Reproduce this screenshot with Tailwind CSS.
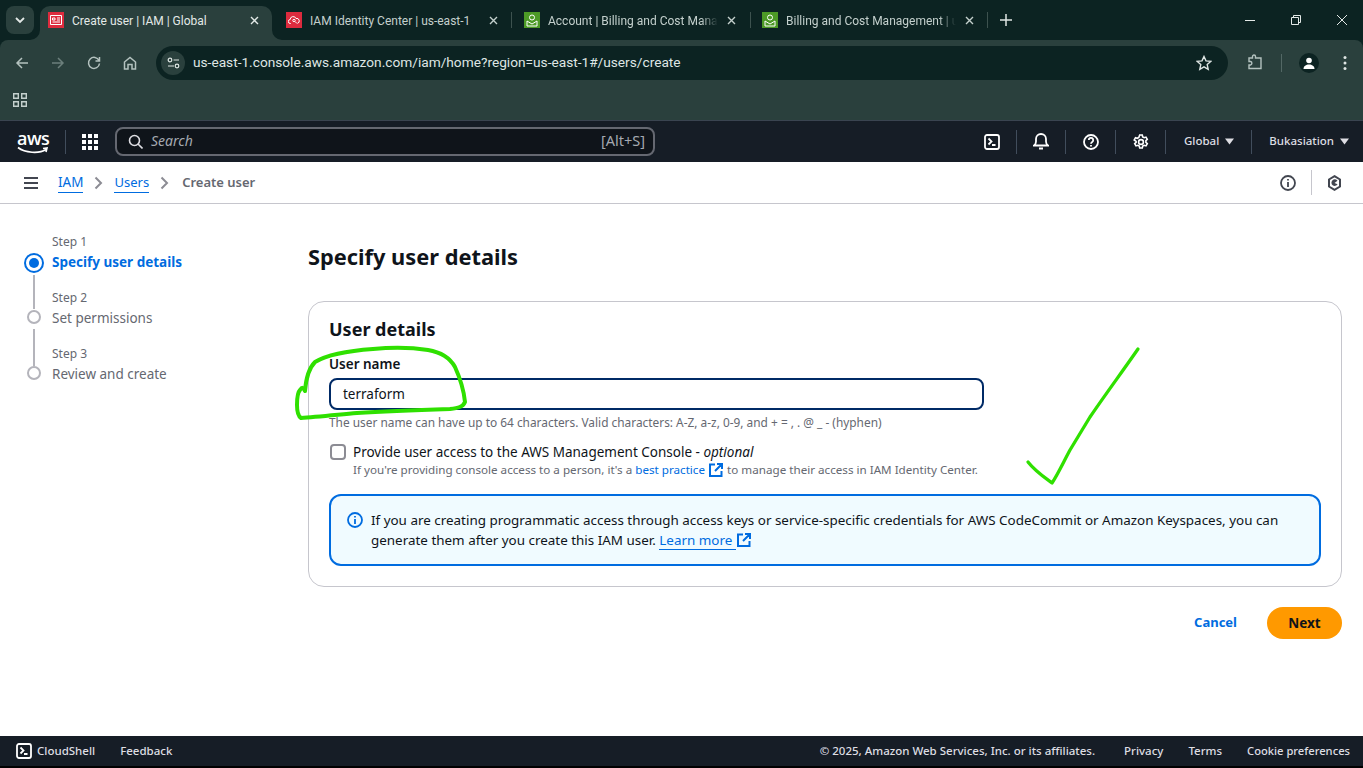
<html>
<head>
    <title>Create user | IAM | Global</title>
    <script src="https://cdn.jsdelivr.net/npm/@tailwindcss/browser@4"></script>
</head>
<body class="relative h-[768px] w-[1363px] overflow-hidden bg-white font-['Noto_Sans',sans-serif] text-[13.5px] text-[#0f141a]">

    <div class="bg-[#0c2322]">
    <!-- Chrome: tabs -->
    <div class="flex h-[40px] bg-[#0c2322] font-['Roboto',sans-serif] text-[12px] text-[#c4d0cd]">
        <div class="ml-[6px] mt-[6px] flex h-[28px] w-[28px] items-center justify-center rounded-[8px] bg-[#2a403d]">
            <svg width="10" height="8" viewBox="0 0 10 8" fill="none" stroke="#e3e9e7" stroke-width="1.800"><path d="M1 2l4 4 4-4"/></svg>
        </div>
        <div class="relative ml-[6px] mt-[6px] flex h-[34px] w-[232px] items-center rounded-t-[10px] bg-[#2a403d] pb-[6px] pl-[8px] text-[#e3e9e7]">
            <svg class="absolute left-[-10px] bottom-0" width="10" height="10" viewBox="0 0 10 10" fill="#2a403d"><path d="M10 0v10H0a10 10 0 0 0 10-10z"/></svg>
            <svg class="absolute right-[-10px] bottom-0" width="10" height="10" viewBox="0 0 10 10" fill="#2a403d"><path d="M0 0v10h10A10 10 0 0 1 0 0z"/></svg>
            <span class="flex h-[16px] w-[16px] items-center justify-center bg-[#dd2b3e]">
                <svg width="12" height="10" viewBox="0 0 12 10" fill="none" stroke="#fff" stroke-width="1"><path d="M.5.5h11v9H.5zM2.500 3h2.500v2H2.500zM7 3h3M7 5h3M2.500 7h7.500"/></svg>
            </span>
            <span class="ml-[8px] mt-[2px] w-[178px] truncate">Create user | IAM | Global</span>
            <svg width="9" height="9" viewBox="0 0 9 9" stroke="#e3e9e7" stroke-width="1.400"><path d="M1 1l7 7M8 1l-7 7"/></svg>
        </div>
        <div class="mt-[3px] flex h-[34px] w-[240px] items-center pl-[14px]">
            <span class="flex h-[16px] w-[16px] items-center justify-center bg-[#dd2b3e]">
                <svg width="12" height="10" viewBox="0 0 12 10" fill="none" stroke="#fff" stroke-width="1"><path d="M3 8.500H2.500a2 2 0 0 1-.3-4 3 3 0 0 1 5.800-1 2.500 2.500 0 0 1 1.500 4.800"/><circle cx="6" cy="5.500" r="1.200"/><path d="M7 6.500l2 2"/></svg>
            </span>
            <span class="ml-[8px] mt-[2px] w-[179px] truncate">IAM Identity Center | us-east-1</span>
            <svg width="9" height="9" viewBox="0 0 9 9" stroke="#c4d0cd" stroke-width="1.400"><path d="M1 1l7 7M8 1l-7 7"/></svg>
            <span class="ml-auto h-[16px] w-px bg-[#3d524f]"></span>
        </div>
        <div class="mt-[3px] flex h-[34px] w-[239px] items-center pl-[12px]">
            <span class="flex h-[16px] w-[16px] items-center justify-center bg-[#4d9a26]">
                <svg width="12" height="13" viewBox="0 0 12 13" fill="none" stroke="#fff" stroke-width="1"><circle cx="6" cy="3.500" r="2.500"/><path d="M1 7l5 3 5-3v5H1z"/></svg>
            </span>
            <span class="ml-[8px] mt-[2px] w-[170px] overflow-hidden whitespace-nowrap [mask-image:linear-gradient(to_right,black_90%,transparent)]">Account | Billing and Cost Management</span>
            <svg class="ml-[9px]" width="9" height="9" viewBox="0 0 9 9" stroke="#c4d0cd" stroke-width="1.400"><path d="M1 1l7 7M8 1l-7 7"/></svg>
            <span class="ml-auto h-[16px] w-px bg-[#3d524f]"></span>
        </div>
        <div class="mt-[3px] flex h-[34px] w-[237px] items-center pl-[11px]">
            <span class="flex h-[16px] w-[16px] items-center justify-center bg-[#4d9a26]">
                <svg width="12" height="13" viewBox="0 0 12 13" fill="none" stroke="#fff" stroke-width="1"><circle cx="6" cy="3.500" r="2.500"/><path d="M1 7l5 3 5-3v5H1z"/></svg>
            </span>
            <span class="ml-[8px] mt-[2px] w-[170px] overflow-hidden whitespace-nowrap [mask-image:linear-gradient(to_right,black_90%,transparent)]">Billing and Cost Management | us-east-1</span>
            <svg class="ml-[9px]" width="9" height="9" viewBox="0 0 9 9" stroke="#c4d0cd" stroke-width="1.400"><path d="M1 1l7 7M8 1l-7 7"/></svg>
            <span class="ml-auto h-[16px] w-px bg-[#3d524f]"></span>
        </div>
        <svg class="ml-[12px] mt-[14px]" width="12" height="12" viewBox="0 0 12 12" stroke="#dfe6e4" stroke-width="1.500"><path d="M6 0v12M0 6h12"/></svg>
        <div class="ml-auto mr-[16px] flex items-center gap-[36px]">
            <svg width="10" height="10" viewBox="0 0 10 10" stroke="#e3e9e7"><path d="M0 5.500h10"/></svg>
            <svg width="10" height="10" viewBox="0 0 10 10" fill="none" stroke="#e3e9e7"><path d="M.5 2.500h7v7h-7zM2.500 2.500V.5h7v7h-2"/></svg>
            <svg width="10" height="10" viewBox="0 0 10 10" stroke="#e3e9e7"><path d="M0 0l10 10M10 0L0 10"/></svg>
        </div>
    </div>

    <!-- Chrome: toolbar -->
    <div class="flex h-[40px] items-center rounded-t-[8px] bg-[#2a403d] font-['Roboto',sans-serif] text-[#dfe6e4]">
        <div class="ml-[15px] mt-[6px] flex w-[141px] items-center">
            <svg class="w-[36px]" width="14" height="14" viewBox="0 0 14 14" fill="none" stroke="#b4c2bf" stroke-width="1.500" preserveAspectRatio="xMinYMid"><path d="M13 7H2M7 2L2 7l5 5"/></svg>
            <svg class="w-[36px]" width="14" height="14" viewBox="0 0 14 14" fill="none" stroke="#6c7f7c" stroke-width="1.500" preserveAspectRatio="xMinYMid"><path d="M1 7h11M7 2l5 5-5 5"/></svg>
            <svg class="w-[36px]" width="14" height="14" viewBox="0 0 14 14" fill="none" stroke="#b4c2bf" stroke-width="1.500" preserveAspectRatio="xMinYMid"><path d="M12 4.500A5.500 5.500 0 1 0 12.500 7.500M12.500 1v4h-4"/></svg>
            <svg class="w-[33px]" width="14" height="14" viewBox="0 0 14 14" fill="none" stroke="#b4c2bf" stroke-width="1.500" preserveAspectRatio="xMinYMid"><path d="M1.500 13V6L7 1.500 12.500 6v7H9V8.500H5V13z"/></svg>
        </div>
        <div class="mt-[6px] flex h-[34px] w-[1072px] items-center rounded-full bg-[#0c2322] pl-[5px]">
            <span class="flex h-[24px] w-[24px] items-center justify-center rounded-full bg-[#2a403d]">
                <svg width="13" height="12" viewBox="0 0 13 12" fill="none" stroke="#dfe6e4" stroke-width="1.200"><circle cx="3" cy="3" r="1.800"/><path d="M6.500 3H12M1 9h6"/><circle cx="10" cy="9" r="1.800"/></svg>
            </span>
            <span class="ml-[8px] text-[13.700px] leading-none text-[#dfe6e4]">us-east-1.console.aws.amazon.com/iam/home?region=us-east-1#/users/create</span>
            <svg class="ml-auto mr-[16px]" width="16" height="16" viewBox="0 0 16 16" fill="none" stroke="#dfe6e4" stroke-width="1.400"><path d="M8 1.500l2 4.400 4.800.5-3.600 3.200 1 4.700L8 11.900l-4.200 2.400 1-4.700L1.200 6.400 6 5.900z"/></svg>
        </div>
        <svg class="ml-[18px] mt-[6px]" width="18" height="18" viewBox="0 0 18 18" fill="none" stroke="#b4c2bf" stroke-width="1.400"><path d="M3 4h3.500V2.500a1.500 1.500 0 0 1 3 0V4H15v10.500H3v-3.500h1.500a1.800 1.800 0 0 0 0-3.500H3z"/></svg>
        <span class="ml-[17px] mt-[6px] h-[18px] w-px bg-[#536865]"></span>
        <span class="ml-[17px] mt-[6px] flex h-[20px] w-[20px] items-center justify-center rounded-full bg-[#0c2322]">
            <svg width="14" height="14" viewBox="0 0 14 14" fill="#fff"><circle cx="7" cy="4.500" r="2.800"/><path d="M1.500 13c0-3 2.500-4.500 5.500-4.500s5.500 1.500 5.500 4.500z"/></svg>
        </span>
        <svg class="ml-[24px] mt-[6px]" width="4" height="16" viewBox="0 0 4 16" fill="#dfe6e4"><circle cx="2" cy="2.500" r="1.500"/><circle cx="2" cy="8" r="1.500"/><circle cx="2" cy="13.500" r="1.500"/></svg>
    </div>
    </div>

    <!-- Chrome: bookmarks -->
    <div class="flex h-[40px] items-center bg-[#2a403d] pl-[13px]">
        <svg width="14" height="14" viewBox="0 0 14 14" fill="none" stroke="#c4d0cd" stroke-width="1.400"><path d="M.7.700h4.600v4.600H.7zM8.700.700h4.600v4.600H8.700zM.7 8.700h4.600v4.600H.7zM8.700 8.700h4.600v4.600H8.700z"/></svg>
    </div>

    <!-- AWS top nav -->
    <div class="flex h-[42px] items-center border-t border-[#3a4450] bg-[#161d26] text-[11.5px] font-medium text-[#dedee3]">
        <div class="relative ml-[17px] h-[30px] w-[32px]">
            <span class="absolute left-0 top-[1px] font-['Open_Sans',sans-serif] text-[18px] leading-[20px] font-semibold tracking-[-0.5px] text-white">aws</span>
            <svg class="absolute left-0 top-[19px]" width="32" height="9" viewBox="0 0 32 9" fill="none" stroke="#fff" stroke-width="1.600"><path d="M1 1.500C8 7 22 8 29 3.500M26 2.500l4-.5-1 4"/></svg>
        </div>
        <span class="ml-[16px] h-[24px] w-px bg-[#414d5c]"></span>
        <svg class="ml-[16px]" width="16" height="16" viewBox="0 0 16 16" fill="#fff"><path d="M0 0h4v4H0zM6 0h4v4H6zM12 0h4v4h-4zM0 6h4v4H0zM6 6h4v4H6zM12 6h4v4h-4zM0 12h4v4H0zM6 12h4v4H6zM12 12h4v4h-4z"/></svg>
        <div class="ml-[17px] flex h-[29px] w-[540px] items-center rounded-[8px] border-2 border-[#656871] bg-[#0f141a] pl-[11px] pr-[8px]">
            <svg width="15" height="15" viewBox="0 0 15 15" fill="none" stroke="#dedee3" stroke-width="1.600"><circle cx="6.500" cy="6.500" r="5"/><path d="M10 10l4.500 4.500"/></svg>
            <span class="mb-[2px] ml-[8px] text-[14px] font-normal italic text-[#a4a9b0]">Search</span>
            <span class="mb-[2px] ml-auto text-[14.500px] font-normal text-[#a4a9b0]">[Alt+S]</span>
        </div>
        <svg class="ml-[329px]" width="16" height="16" viewBox="0 0 16 16" fill="none" stroke="#fff" stroke-width="1.800"><rect x="1" y="1" width="14" height="14" rx="2"/><path d="M4.500 4.500L7.500 7.500 4.500 10.500M8 11h3.500"/></svg>
        <span class="ml-[16px] h-[24px] w-px bg-[#414d5c]"></span>
        <svg class="ml-[16px]" width="16" height="17" viewBox="0 0 16 17" fill="none" stroke="#fff" stroke-width="1.800"><path d="M1 12.500c1.500-1 2-2 2-4V6a5 5 0 0 1 10 0v2.500c0 2 .5 3 2 4zM6 15.500h4"/></svg>
        <span class="ml-[16px] h-[24px] w-px bg-[#414d5c]"></span>
        <svg class="ml-[17px]" width="16" height="16" viewBox="0 0 16 16" fill="none" stroke="#fff" stroke-width="1.800"><circle cx="8" cy="8" r="7"/><path d="M5.800 6a2.200 2.200 0 1 1 3.400 1.900c-.8.500-1.200 1-1.200 1.900"/><path d="M8 11v1.500"/></svg>
        <span class="ml-[16px] h-[24px] w-px bg-[#414d5c]"></span>
        <svg class="ml-[17px]" width="16" height="16" viewBox="0 0 16 16" fill="none" stroke="#fff" stroke-width="1.600"><circle cx="8" cy="8" r="2.400"/><path d="M6.700 1h2.600l.4 1.900 1.500.8 1.800-.6 1.300 2.300-1.400 1.300v1.600l1.400 1.300-1.300 2.300-1.800-.6-1.500.8-.4 1.900H6.700l-.4-1.900-1.500-.8-1.800.6-1.300-2.300 1.400-1.300V7.300L1.200 6l1.300-2.300 1.800.6 1.500-.8z"/></svg>
        <span class="ml-[16px] h-[24px] w-px bg-[#414d5c]"></span>
        <span class="mb-[2px] ml-[18px]">Global</span>
        <svg class="ml-[6px]" width="9" height="7" viewBox="0 0 9 7" fill="#dedee3"><path d="M0 .5h9L4.500 6.500z"/></svg>
        <span class="ml-[17px] h-[24px] w-px bg-[#414d5c]"></span>
        <span class="mb-[2px] ml-[17px]">Bukasiation</span>
        <svg class="ml-[6px]" width="9" height="7" viewBox="0 0 9 7" fill="#dedee3"><path d="M0 .5h9L4.500 6.500z"/></svg>
    </div>

    <!-- Breadcrumbs -->
    <div class="flex h-[42px] items-center border-b border-[#c6c6cd] pl-[24px] text-[13px]">
        <svg width="14" height="12" viewBox="0 0 14 12" stroke="#424650" stroke-width="2"><path d="M0 1h14M0 6h14M0 11h14"/></svg>
        <a class="ml-[20px] border-b border-[#006ce0] text-[13.500px] leading-[19px] text-[#006ce0]">IAM</a>
        <svg class="ml-[11px]" width="9" height="14" viewBox="0 0 9 14" fill="none" stroke="#8c8c94" stroke-width="2"><path d="M1.500 1.500L7 7l-5.500 5.500"/></svg>
        <a class="ml-[11px] border-b border-[#006ce0] leading-[19px] text-[#006ce0]">Users</a>
        <svg class="ml-[11px]" width="9" height="14" viewBox="0 0 9 14" fill="none" stroke="#8c8c94" stroke-width="2"><path d="M1.500 1.500L7 7l-5.500 5.500"/></svg>
        <span class="ml-[13px] font-semibold text-[#656871]">Create user</span>
        <svg class="ml-auto" width="16" height="16" viewBox="0 0 16 16" fill="none" stroke="#424650" stroke-width="1.800"><circle cx="8" cy="8" r="7"/><path d="M8 7v5M8 4v1.600"/></svg>
        <span class="ml-[15px] h-[25px] w-px bg-[#c6c6cd]"></span>
        <svg class="ml-[15px] mr-[21px]" width="15" height="16" viewBox="0 0 15 16" fill="none" stroke="#424650" stroke-width="2"><path d="M7.500 1.200l5.500 3.300v7l-5.500 3.300L2 11.500v-7z"/><path d="M7.500 8l3-2.200A3.300 3.300 0 1 0 10.600 9.200z" fill="#424650" stroke="none"/></svg>
    </div>

    <!-- Page body -->
    <div class="flex h-[532px]">
        <!-- Wizard steps -->
        <nav class="relative w-[308px] pl-[24px] pt-[29px]">
            <div class="absolute left-[33px] top-[71px] h-[34px] w-[2px] bg-[#b4b4bb]"></div>
            <div class="absolute left-[33px] top-[125px] h-[37px] w-[2px] bg-[#b4b4bb]"></div>
            <div class="flex h-[56px] items-start">
                <span class="mt-[20px] flex h-[20px] w-[20px] items-center justify-center rounded-full border-2 border-[#006ce0]"><span class="h-[10px] w-[10px] rounded-full bg-[#006ce0]"></span></span>
                <div class="ml-[8px] flex flex-col">
                    <span class="text-[12px] leading-[18px] text-[#656871]">Step 1</span>
                    <span class="leading-[22px] font-bold text-[#006ce0]">Specify user details</span>
                </div>
            </div>
            <div class="flex h-[56px] items-start">
                <span class="ml-[3px] mt-[21px] h-[14px] w-[14px] rounded-full border-2 border-[#b4b4bb]"></span>
                <div class="ml-[11px] flex flex-col">
                    <span class="text-[12px] leading-[18px] text-[#656871]">Step 2</span>
                    <span class="leading-[22px] text-[#656871]">Set permissions</span>
                </div>
            </div>
            <div class="flex h-[56px] items-start">
                <span class="ml-[3px] mt-[21px] h-[14px] w-[14px] rounded-full border-2 border-[#b4b4bb]"></span>
                <div class="ml-[11px] flex flex-col">
                    <span class="text-[12px] leading-[18px] text-[#656871]">Step 3</span>
                    <span class="leading-[22px] text-[#656871]">Review and create</span>
                </div>
            </div>
        </nav>

        <main class="w-[1034px] pt-[37px]">
            <h1 class="text-[21.800px] leading-[32px] font-bold">Specify user details</h1>

            <section class="mt-[28px] h-[286px] rounded-[16px] border border-[#c6c6cd] px-[20px] pt-[14px]">
                <h2 class="text-[18px] leading-[26px] font-bold">User details</h2>
                <label class="mt-[12px] block leading-[20px] font-semibold">User name</label>
                <div class="mt-[4px] flex h-[32px] w-[655px] items-center rounded-[8px] border-2 border-[#002a66] pl-[12px]">terraform</div>
                <p class="mt-[3px] text-[11.880px] leading-[18px] text-[#656871]">The user name can have up to 64 characters. Valid characters: A-Z, a-z, 0-9, and + = , . @ _ - (hyphen)</p>
                <div class="mt-[11px] flex">
                    <span class="ml-[1px] mt-[2px] h-[16px] w-[16px] rounded-[4px] border-2 border-[#8c8c94]"></span>
                    <div class="ml-[7px]">
                        <p class="leading-[20px]">Provide user access to the AWS Management Console - <i>optional</i></p>
                        <p class="text-[11.650px] leading-[16px] text-[#656871]">If you're providing console access to a person, it's a <a class="text-[#006ce0]">best practice</a>
                            <svg class="mx-[1px] inline-block align-[-3px]" width="14" height="14" viewBox="0 0 14 14" fill="none" stroke="#006ce0" stroke-width="2"><path d="M6 1.500H1v11.500h11.500V8M8 1h5v5M13 1L6 8"/></svg>
                            to manage their access in IAM Identity Center.</p>
                    </div>
                </div>
                <div class="mt-[16px] flex h-[72px] w-[992px] rounded-[12px] border-2 border-[#006ce0] bg-[#f0fbff] pl-[16px] pt-[14px]">
                    <svg class="mt-[2px]" width="16" height="16" viewBox="0 0 16 16" fill="none" stroke="#006ce0" stroke-width="1.800"><circle cx="8" cy="8" r="7"/><path d="M8 7v5M8 4v1.600"/></svg>
                    <p class="ml-[8px] w-[930px] text-[13.430px] leading-[20px]">If you are creating programmatic access through access keys or service-specific credentials for AWS CodeCommit or Amazon Keyspaces, you can generate them after you create this IAM user. <a class="border-b border-[#006ce0] text-[#006ce0]">Learn more&nbsp;</a><svg class="ml-[1px] inline-block align-[-2px]" width="14" height="14" viewBox="0 0 14 14" fill="none" stroke="#006ce0" stroke-width="2"><path d="M6 1.500H1v11.500h11.500V8M8 1h5v5M13 1L6 8"/></svg></p>
                </div>
            </section>

            <div class="mt-[20px] flex items-center justify-end">
                <a class="text-[13px] font-bold text-[#006ce0]">Cancel</a>
                <button class="ml-[30px] h-[32px] w-[75px] rounded-full bg-[#ff9900] font-bold text-[#0f141a]">Next</button>
            </div>
        </main>
    </div>

    <!-- Console footer -->
    <div class="flex h-[30px] items-center bg-[#161d26] pl-[16px] pr-[13px] text-[11.500px] font-medium text-[#dedee3]">
        <svg width="16" height="16" viewBox="0 0 16 16" fill="none" stroke="#fff" stroke-width="1.800"><rect x="1" y="1" width="14" height="14" rx="2"/><path d="M4.500 4.500L7.500 7.500 4.500 10.500M8 11h3.500"/></svg>
        <span class="ml-[5px]">CloudShell</span>
        <span class="ml-[25px]">Feedback</span>
        <span class="ml-auto">© 2025, Amazon Web Services, Inc. or its affiliates.</span>
        <span class="ml-[29px]">Privacy</span>
        <span class="ml-[25px]">Terms</span>
        <span class="ml-[25px] text-[11.200px]">Cookie preferences</span>
    </div>
    <div class="h-[2px] bg-black"></div>

    <!-- Green hand-drawn annotations on top of the screenshot -->
    <svg class="pointer-events-none absolute inset-0" width="1363" height="768" viewBox="0 0 1363 768" fill="none" stroke="#2fe000" stroke-width="4" stroke-linecap="round" stroke-linejoin="round">
        <path d="M305 391C306 378 309 368 315 362C325 356 345 351 373 349C395 347 415 348 428 350C440 352 450 358 455 367C460 378 464 392 465 402C463 407 458 408 450 409C420 410 390 411 357 413C335 415 315 417 301 418C298 416 297 412 297 405C297 398 298 392 300 390C302 387 303 387 305 391"/>
        <path stroke-width="3.300" d="M1138 349C1122 372 1105 395 1090 417C1082 430 1076 440 1070 450C1064 461 1058 474 1052 483C1044 477 1035 471 1028 462"/>
    </svg>
</body>
</html>
